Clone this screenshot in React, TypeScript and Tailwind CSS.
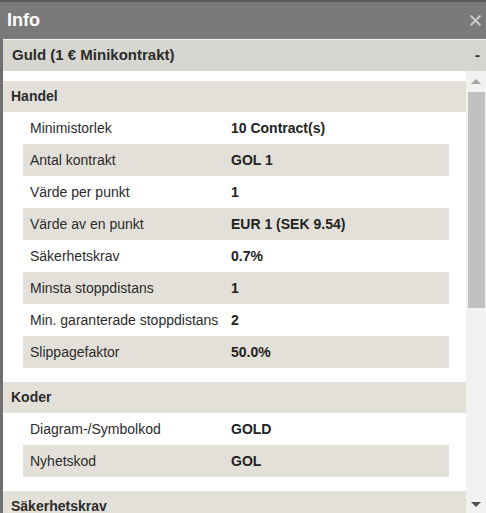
import { X } from 'lucide-react';

type Row = { label: string; value: string };

const sections: { title: string; rows: Row[] }[] = [
  {
    title: 'Handel',
    rows: [
      { label: 'Minimistorlek', value: '10 Contract(s)' },
      { label: 'Antal kontrakt', value: 'GOL 1' },
      { label: 'Värde per punkt', value: '1' },
      { label: 'Värde av en punkt', value: 'EUR 1 (SEK 9.54)' },
      { label: 'Säkerhetskrav', value: '0.7%' },
      { label: 'Minsta stoppdistans', value: '1' },
      { label: 'Min. garanterade stoppdistans', value: '2' },
      { label: 'Slippagefaktor', value: '50.0%' },
    ],
  },
  {
    title: 'Koder',
    rows: [
      { label: 'Diagram-/Symbolkod', value: 'GOLD' },
      { label: 'Nyhetskod', value: 'GOL' },
    ],
  },
  { title: 'Säkerhetskrav', rows: [] },
];

export default function App() {
  return (
    <div className="w-[486px] h-[513px] overflow-hidden flex flex-col bg-white font-['Liberation_Sans',Arial,sans-serif] text-[#2b2b2b]">
      {/* Title bar */}
      <div className="h-[39px] shrink-0 flex items-center justify-between pl-[7px] pr-[2px] bg-[#7a7a7a] border-t-2 border-[#585858]">
        <span className="text-[18px] font-bold text-white">Info</span>
        <X className="w-[17px] h-[17px] text-[#c9c9c9]" strokeWidth={3} />
      </div>

      <div className="flex flex-1 min-h-0">
        <div className="w-[3px] shrink-0 bg-[#6f6f6f]" />
        <div className="flex-1 flex flex-col min-w-0">
          {/* Accordion header */}
          <div className="h-[32px] shrink-0 flex items-center justify-between pl-[9px] pr-[6px] bg-[#d6d6d0] border-t border-[#f4f4f2] text-[15px] font-bold">
            <span>Guld (1 € Minikontrakt)</span>
            <span>-</span>
          </div>

          <div className="flex flex-1 min-h-0">
            {/* Scroll content */}
            <div className="flex-1 pt-[10px] overflow-hidden">
              {sections.map((s) => (
                <div key={s.title} className="mb-[14px]">
                  <div className="h-[31px] flex items-center pl-[8px] bg-[#e3e0d9] text-[14px] font-bold">
                    {s.title}
                  </div>
                  {s.rows.map((r, i) => (
                    <div
                      key={r.label}
                      className={`ml-[20px] mr-[17px] h-[32px] flex items-center text-[14px] ${i % 2 === 1 ? 'bg-[#e3e0d9]' : ''}`}
                    >
                      <span className="w-[208px] pl-[7px] shrink-0">{r.label}</span>
                      <span className="font-bold text-[#222]">{r.value}</span>
                    </div>
                  ))}
                </div>
              ))}
            </div>

            {/* Scrollbar */}
            <div className="w-[20px] shrink-0 bg-[#f1f1f1] flex flex-col items-center">
              <div className="h-[21px] flex items-center justify-center">
                <div className="w-0 h-0 border-l-[5px] border-r-[5px] border-b-[5px] border-l-transparent border-r-transparent border-b-[#a3a3a3]" />
              </div>
              <div className="w-[17px] h-[216px] bg-[#c1c1c1]" />
              <div className="flex-1" />
              <div className="h-[17px] flex items-center justify-center">
                <div className="w-0 h-0 border-l-[5px] border-r-[5px] border-t-[5px] border-l-transparent border-r-transparent border-t-[#505050]" />
              </div>
            </div>
          </div>
        </div>
      </div>
    </div>
  );
}
